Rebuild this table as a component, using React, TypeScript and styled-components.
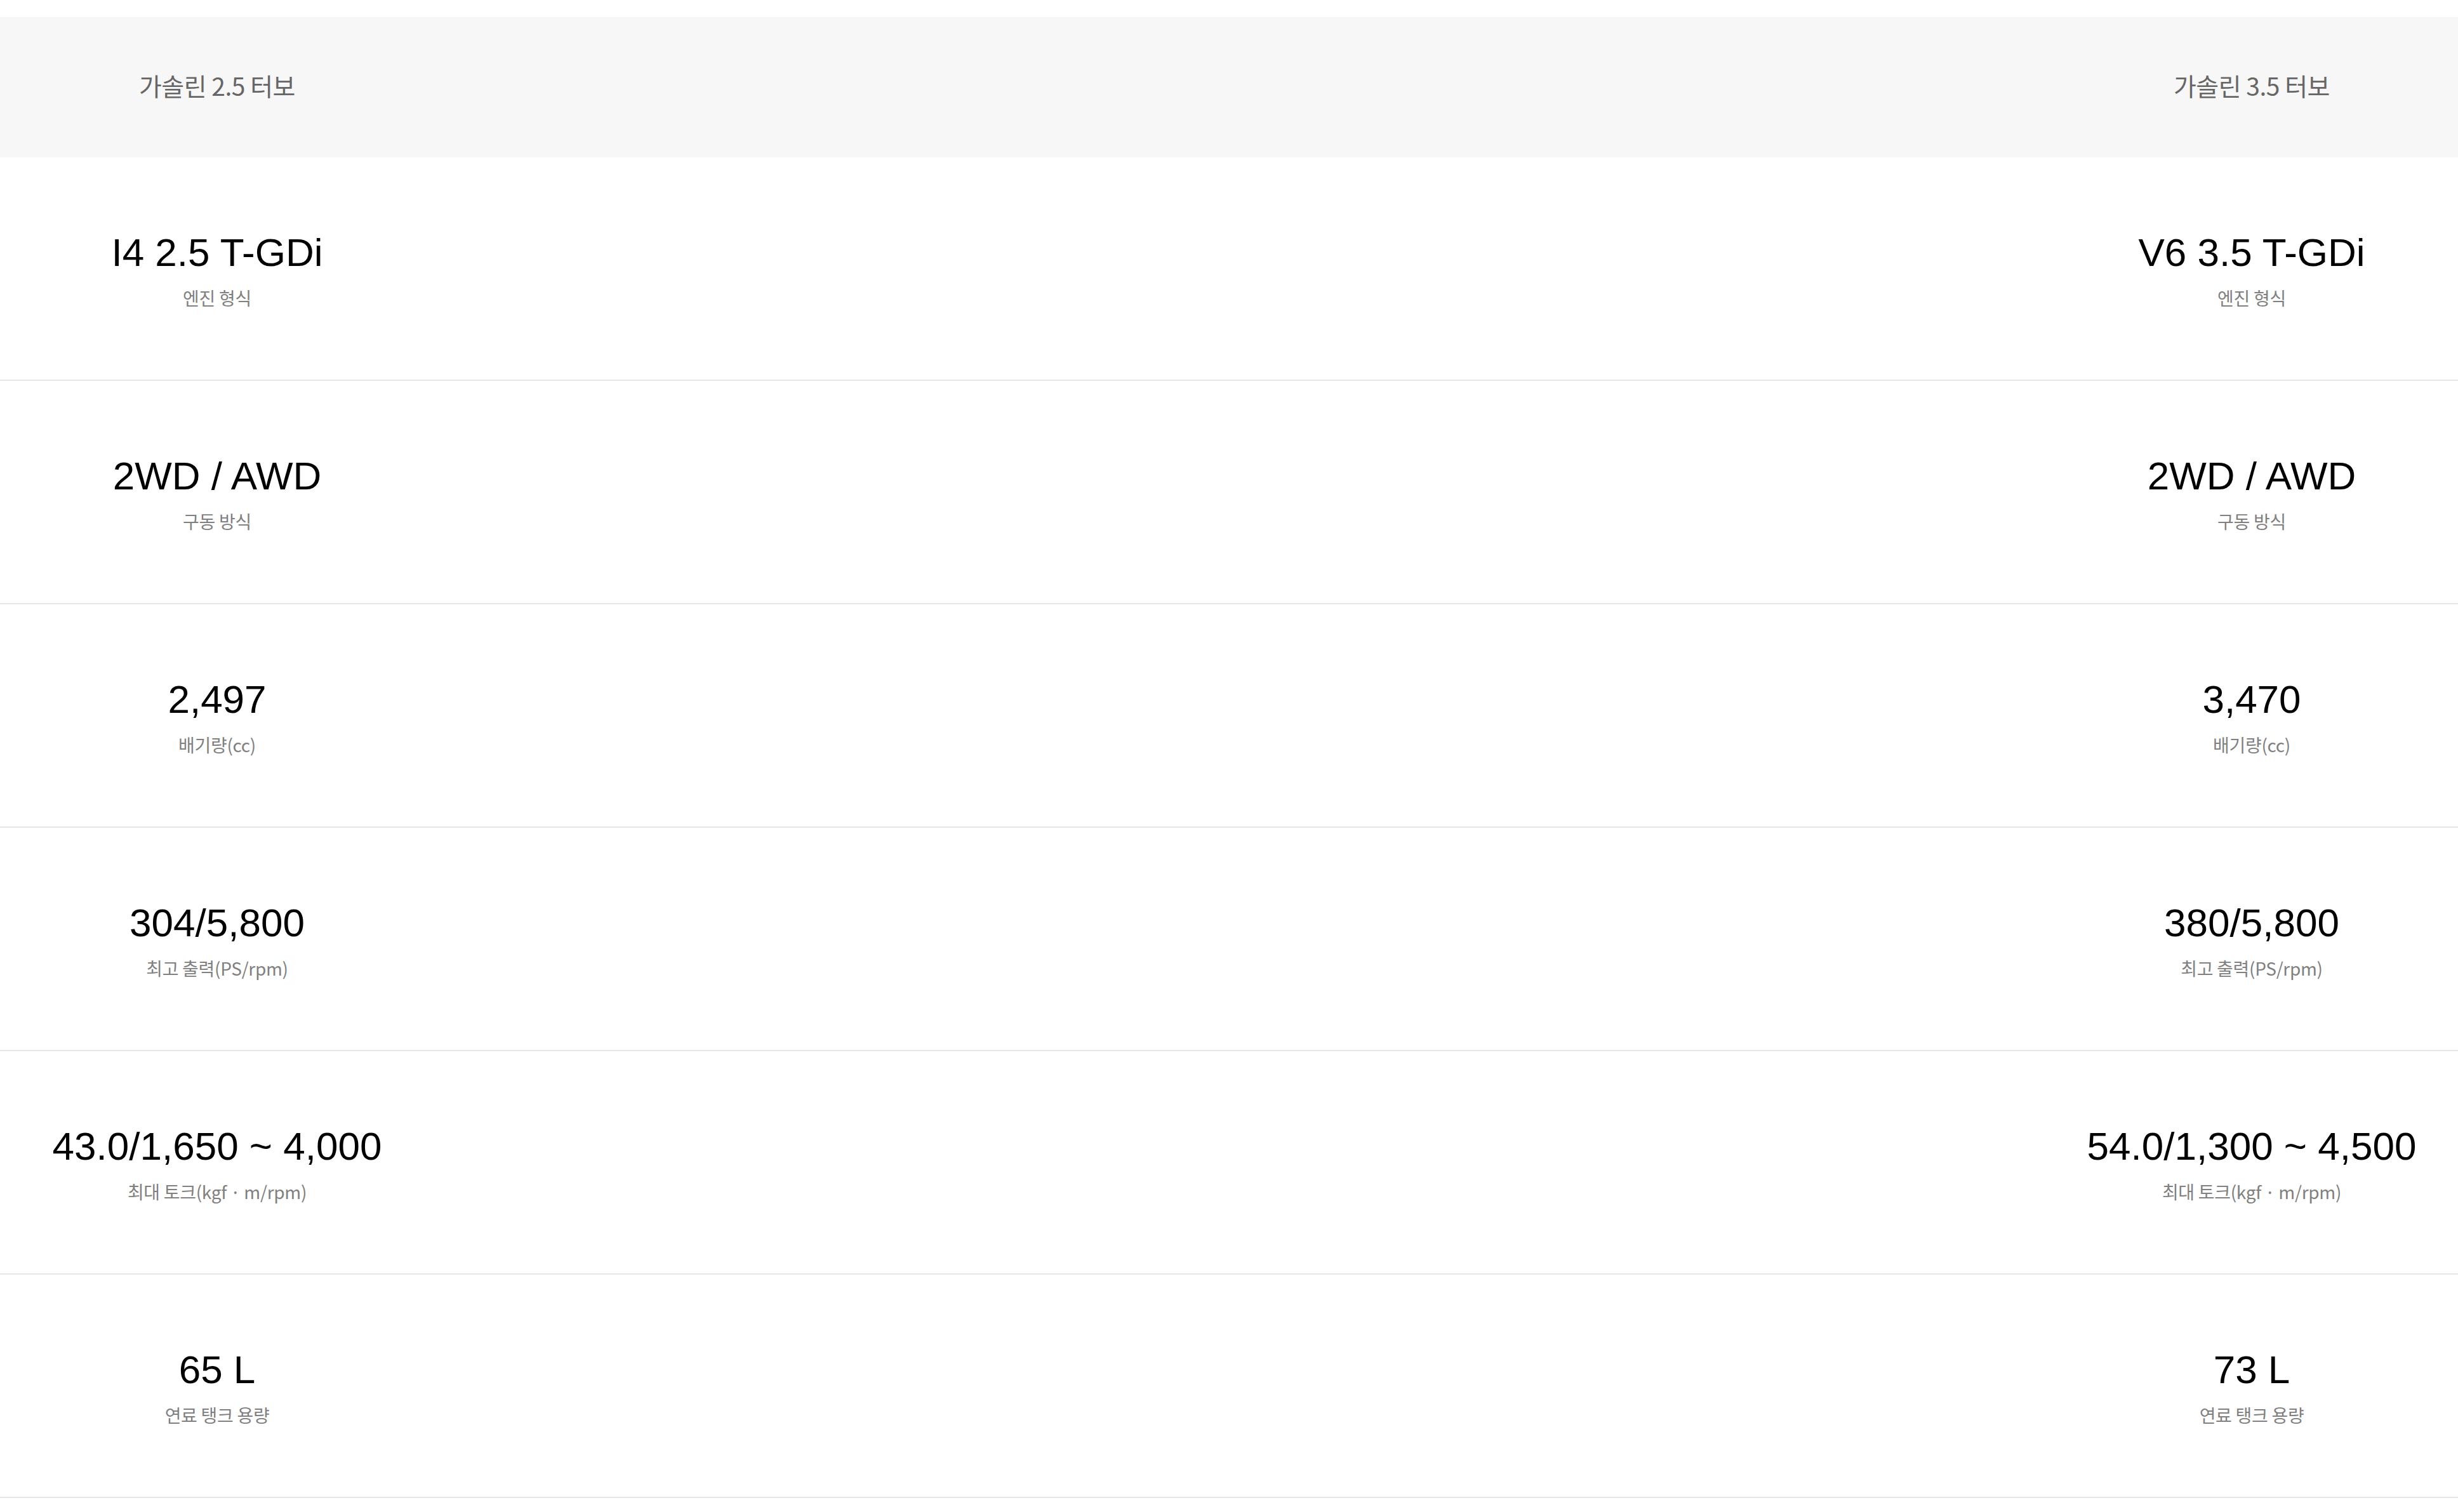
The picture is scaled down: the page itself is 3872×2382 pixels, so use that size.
import React from "react";
import styled, { createGlobalStyle } from "styled-components";

const GlobalStyle = createGlobalStyle`
  html, body {
    margin: 0;
    padding: 0;
    background: #ffffff;
  }
  body {
    font-family: "Liberation Sans", "Noto Sans CJK KR", sans-serif;
  }
`;

const Page = styled.div`
  padding-top: 27px;
  width: 100%;
`;

const Table = styled.div`
  display: flex;
  flex-direction: column;
`;

const HeaderRow = styled.div`
  display: flex;
  justify-content: space-between;
  align-items: center;
  box-sizing: border-box;
  height: 221px;
  padding-left: 17px;
  padding-bottom: 8px;
  background: #f7f7f7;
`;

const HeaderCell = styled.div`
  width: 650px;
  text-align: center;
  font-family: "Noto Sans CJK KR", sans-serif;
  font-size: 39px;
  line-height: 50px;
  color: #666666;
  letter-spacing: -0.5px;
`;

const SpecRow = styled.div`
  display: flex;
  justify-content: space-between;
  align-items: flex-start;
  box-sizing: border-box;
  height: 352px;
  padding-left: 17px;
  padding-top: 113px;
  border-bottom: 2px solid #e6e6e6;
`;

const Cell = styled.div`
  width: 650px;
  display: flex;
  flex-direction: column;
  align-items: center;
  gap: 14px;
`;

const Value = styled.div`
  font-family: "Liberation Sans", "Noto Sans CJK KR", sans-serif;
  font-size: 62px;
  line-height: 74px;
  color: #000000;
  white-space: nowrap;
`;

const Label = styled.div`
  font-family: "Noto Sans CJK KR", sans-serif;
  font-size: 28px;
  line-height: 40px;
  color: #808080;
  white-space: nowrap;
  letter-spacing: -0.3px;
`;

type Spec = { label: string; a: string; b: string };

const specs: Spec[] = [
  { label: "엔진 형식", a: "I4 2.5 T-GDi", b: "V6 3.5 T-GDi" },
  { label: "구동 방식", a: "2WD / AWD", b: "2WD / AWD" },
  { label: "배기량(cc)", a: "2,497", b: "3,470" },
  { label: "최고 출력(PS/rpm)", a: "304/5,800", b: "380/5,800" },
  { label: "최대 토크(kgf · m/rpm)", a: "43.0/1,650 ~ 4,000", b: "54.0/1,300 ~ 4,500" },
  { label: "연료 탱크 용량", a: "65 L", b: "73 L" },
];

export default function App() {
  return (
    <>
      <GlobalStyle />
      <Page>
        <Table>
          <HeaderRow>
            <HeaderCell>가솔린 2.5 터보</HeaderCell>
            <HeaderCell>가솔린 3.5 터보</HeaderCell>
          </HeaderRow>
          {specs.map((s) => (
            <SpecRow key={s.label}>
              <Cell>
                <Value>{s.a}</Value>
                <Label>{s.label}</Label>
              </Cell>
              <Cell>
                <Value>{s.b}</Value>
                <Label>{s.label}</Label>
              </Cell>
            </SpecRow>
          ))}
        </Table>
      </Page>
    </>
  );
}
